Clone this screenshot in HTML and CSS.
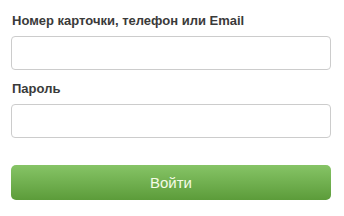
FILE: index.html
```html
<!DOCTYPE html>
<html lang="ru">
<head>
    <meta charset="UTF-8">
    <meta name="viewport" content="width=device-width, initial-scale=1.0">
    <title>Вход</title>
    <link rel="stylesheet" href="styles.css">
</head>
<body>
    <form class="login-form" onsubmit="return false">
        <div class="field">
            <label for="login">Номер карточки, телефон или Email</label>
            <input type="text" id="login">
        </div>
        <div class="field">
            <label for="password">Пароль</label>
            <input type="password" id="password">
        </div>
        <button type="submit" class="login-btn">Войти</button>
    </form>
</body>
</html>
```

FILE: styles.css
```css
body {
    font-family: "Liberation Sans", Arial, sans-serif;
    background-color: #ffffff;
    margin: 0;
    padding: 0;
}

.login-form {
    width: 320px;
    padding: 13px 0 0 11px;
}

.field {
    display: flex;
    flex-direction: column;
    gap: 7px;
    margin-bottom: 11px;
}

.field label {
    padding-left: 1px;
    font-size: 13px;
    font-weight: bold;
    color: #3a3a3a;
    line-height: 16px;
}

.field input {
    box-sizing: border-box;
    width: 320px;
    height: 34px;
    padding: 6px 8px;
    border: 1px solid #cccccc;
    border-radius: 4px;
    font-size: 14px;
    outline: none;
}

.login-btn {
    display: block;
    width: 320px;
    height: 35px;
    margin-top: 27px;
    border: none;
    border-radius: 5px;
    background: linear-gradient(to bottom, #86c466, #5c9c3a);
    color: #f4fbe6;
    font-family: "Liberation Sans", Arial, sans-serif;
    font-size: 15px;
    cursor: pointer;
}
```
